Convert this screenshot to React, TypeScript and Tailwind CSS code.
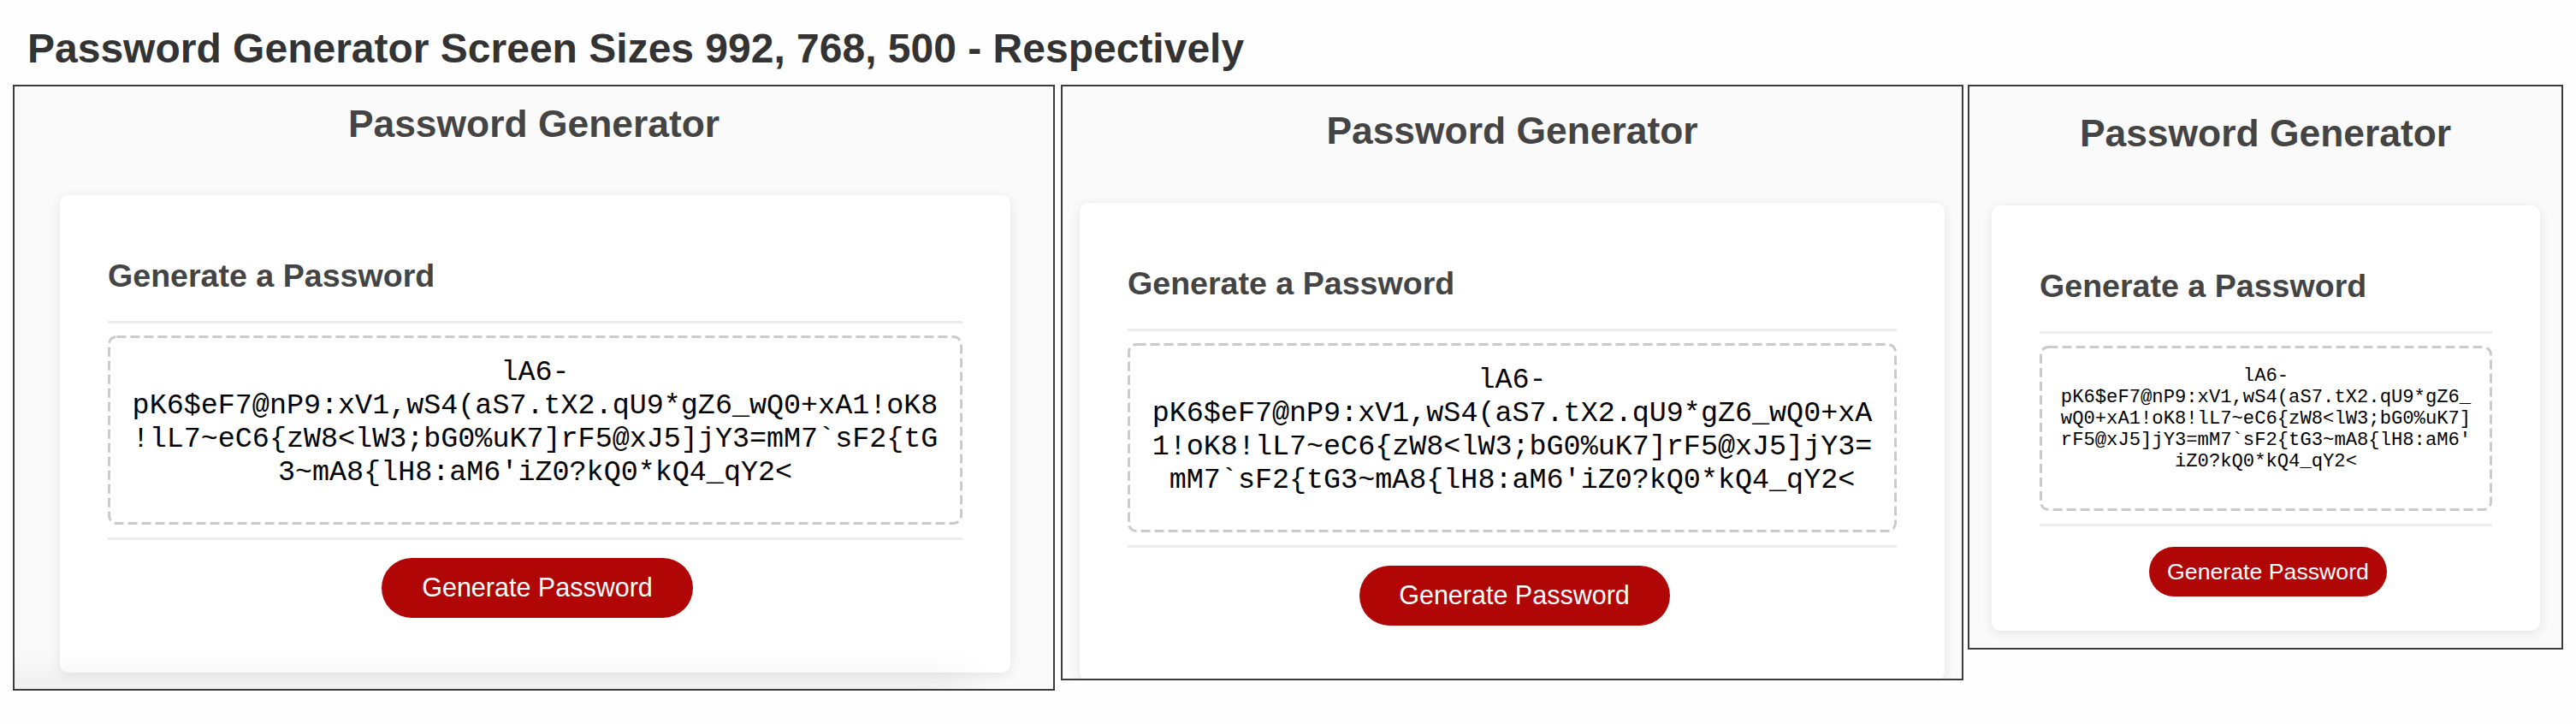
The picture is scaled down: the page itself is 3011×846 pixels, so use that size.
import React from "react";

const PASSWORD =
  "lA6-pK6$eF7@nP9:xV1,wS4(aS7.tX2.qU9*gZ6_wQ0+xA1!oK8!lL7~eC6{zW8<lW3;bG0%uK7]rF5@xJ5]jY3=mM7`sF2{tG3~mA8{lH8:aM6'iZ0?kQ0*kQ4_qY2<";

interface FrameProps {
  frameClass: string;
  titleClass: string;
  cardClass: string;
  boxClass: string;
  buttonClass: string;
  children?: React.ReactNode;
}

function Frame({ frameClass, titleClass, cardClass, boxClass, buttonClass, children }: FrameProps) {
  return (
    <div className={`relative shrink-0 overflow-hidden border-2 border-[#3c3c3c] bg-[#fafafa] ${frameClass}`}>
      <h1 className={`text-center text-[44.4px] leading-[50px] font-bold text-[#444] ${titleClass}`}>
        Password Generator
      </h1>
      <div className={`rounded-[10px] bg-white px-[56px] pt-[71px] shadow-[0_3px_14px_rgba(0,0,0,0.09)] ${cardClass}`}>
        <h2 className="text-[37.6px] leading-[46px] font-bold text-[#444]">Generate a Password</h2>
        <div className="mt-[30px] h-[3px] bg-[#ececec]" />
        <div
          className={`relative mt-[14px] text-center font-['Liberation_Mono',monospace] wrap-anywhere text-black ${boxClass}`}
        >
          <svg className="absolute inset-0 h-full w-full" fill="none">
            <rect
              x="1.5"
              y="1.5"
              rx="9"
              className="h-[calc(100%-3px)] w-[calc(100%-3px)]"
              stroke="#cbcbcb"
              strokeWidth="3"
              strokeDasharray="11 5"
            />
          </svg>
          {PASSWORD}
        </div>
        <div className="mt-[15px] h-[3px] bg-[#ececec]" />
        <div className="flex justify-center">
          <button className={`ml-[5px] rounded-full bg-[#b00606] text-white ${buttonClass}`}>Generate Password</button>
        </div>
      </div>
      {children}
    </div>
  );
}

export default function App() {
  return (
    <div className="h-[846px] w-[3011px] overflow-hidden bg-[#fefefe] font-['Liberation_Sans',Arial,sans-serif]">
      <h1 className="pt-[33px] pl-[32px] text-[48px] leading-[48px] font-bold text-[#333]">
        Password Generator Screen Sizes 992, 768, 500 - Respectively
      </h1>
      <div className="mt-[18px] flex items-start pl-[15px]">
        <Frame
          frameClass="h-[708px] w-[1218px]"
          titleClass="pt-[19px]"
          cardClass="mt-[58px] mr-[50px] ml-[53px] h-[558px]"
          boxClass="h-[221px] px-[28px] pt-[24px] text-[33.4px] leading-[39px]"
          buttonClass="mt-[21px] h-[70px] w-[364px] text-[30.5px]"
        >
          {/* shade that leans over the bottom edge of the first capture */}
          <div className="absolute top-full right-[100px] -left-[80px] h-[20px] shadow-[0_0_50px_rgba(0,0,0,0.15)]" />
        </Frame>
        <div className="w-[7px] shrink-0" />
        <Frame
          frameClass="h-[696px] w-[1055px]"
          titleClass="pt-[27px]"
          cardClass="mx-[20px] mt-[59px] h-[558px]"
          boxClass="h-[221px] px-[28px] pt-[24px] text-[33.4px] leading-[39px]"
          buttonClass="mt-[21px] h-[70px] w-[363px] text-[30.5px]"
        />
        <div className="w-[5px] shrink-0" />
        <Frame
          frameClass="h-[660px] w-[696px]"
          titleClass="pt-[30px]"
          cardClass="mt-[59px] mr-[25px] ml-[26px] h-[497px]"
          boxClass="h-[193px] px-[21px] pt-[23px] text-[22.2px] leading-[25px]"
          buttonClass="mt-[24px] h-[58px] w-[278px] text-[26.7px]"
        />
      </div>
    </div>
  );
}
